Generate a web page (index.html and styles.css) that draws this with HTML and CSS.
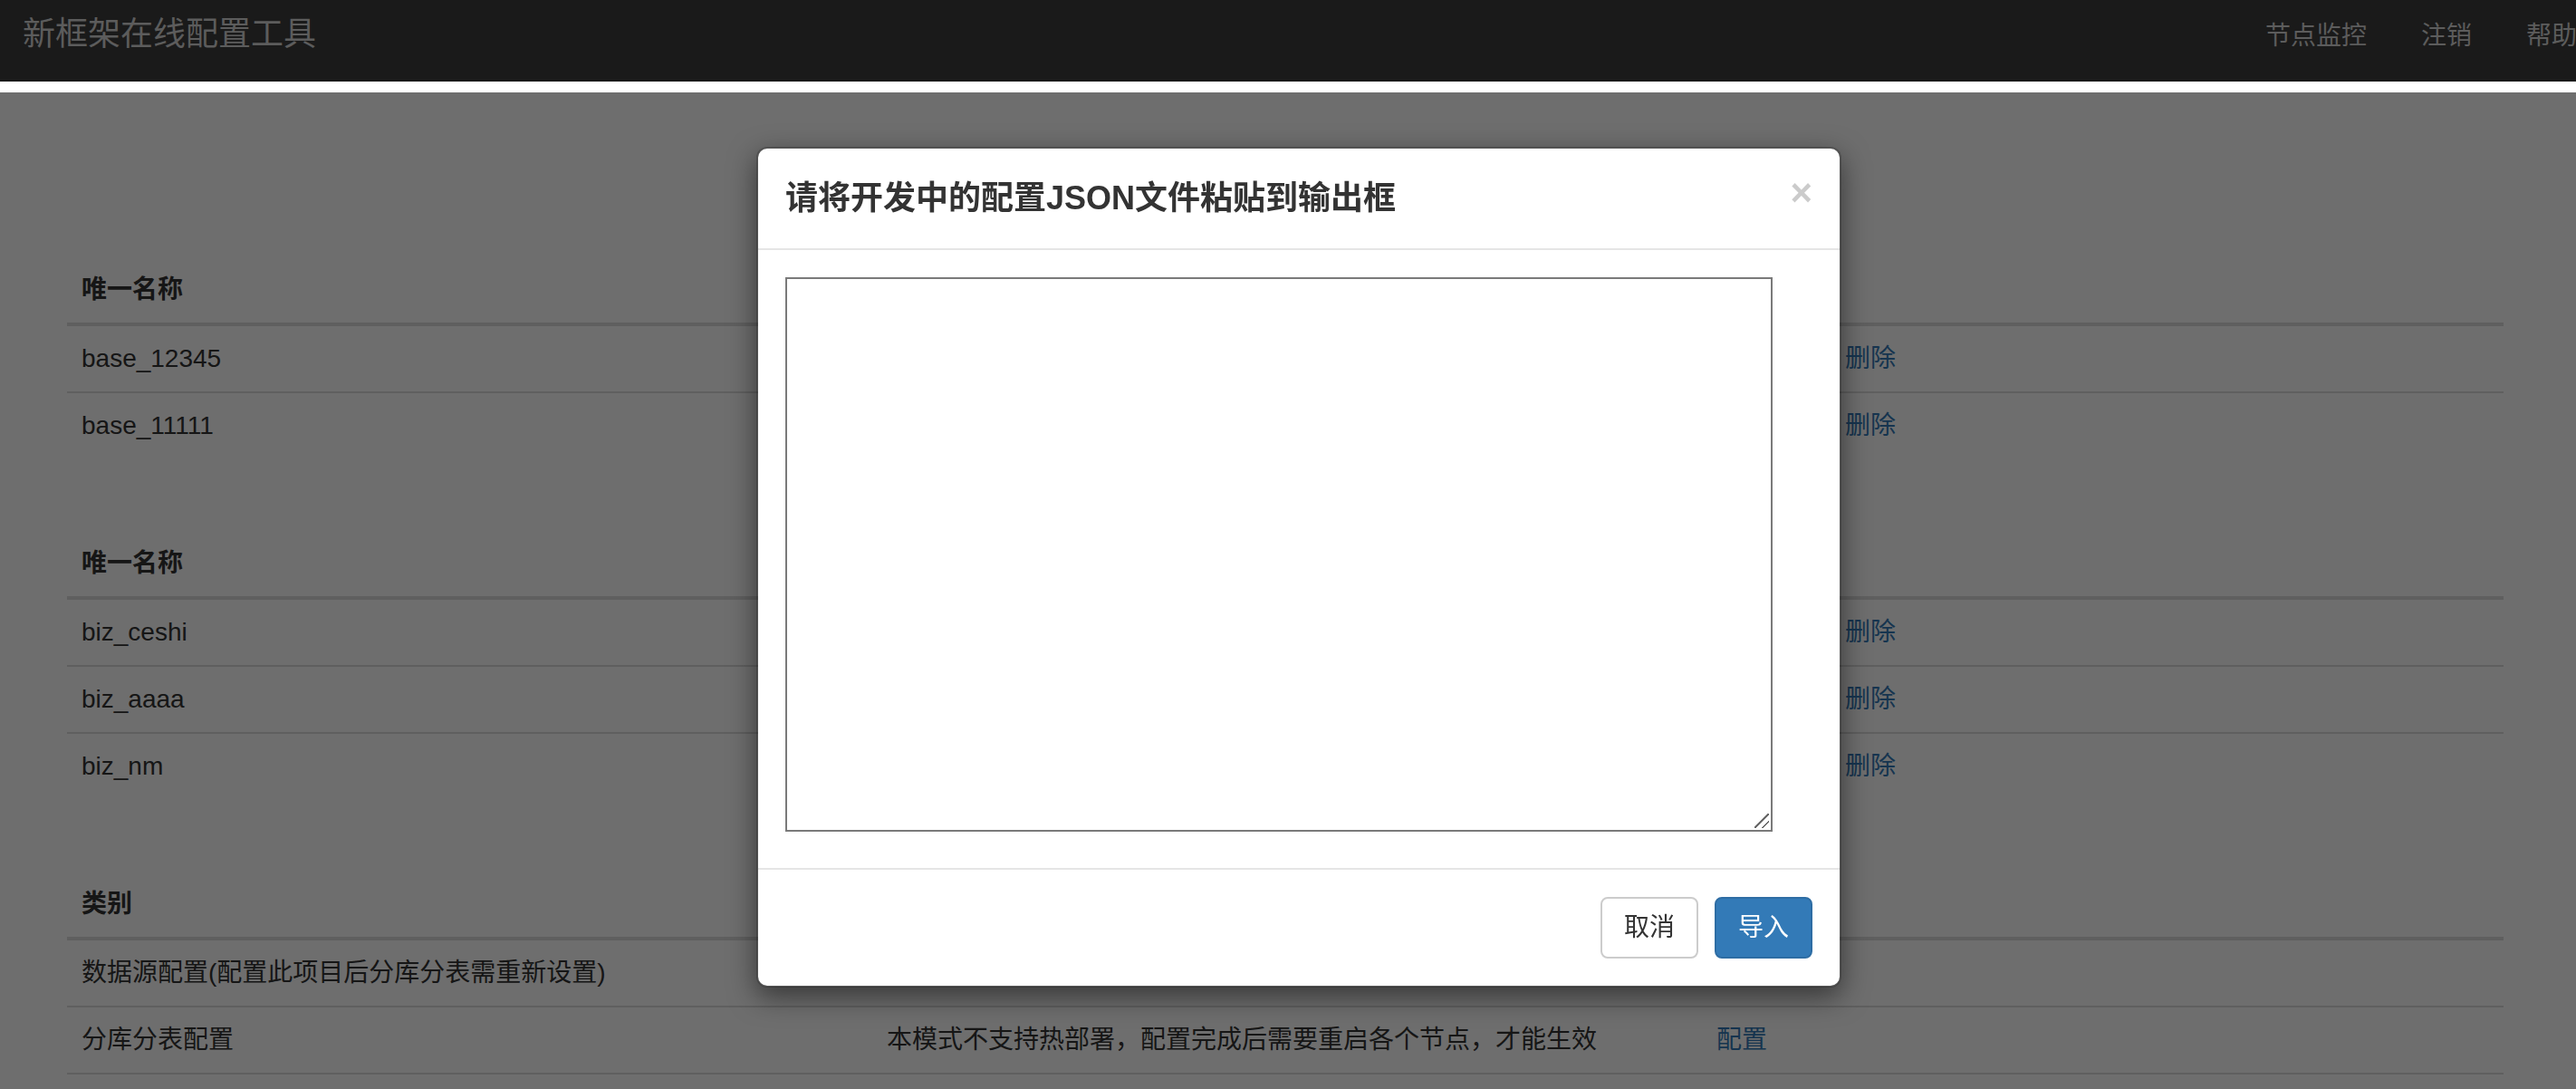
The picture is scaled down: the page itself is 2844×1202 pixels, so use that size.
FILE: index.html
```html
<!DOCTYPE html>
<html lang="zh-CN">
<head>
<meta charset="utf-8">
<title>新框架在线配置工具</title>
<link rel="stylesheet" href="styles.css">
</head>
<body>
<nav class="navbar">
  <a class="brand">新框架在线配置工具</a>
  <ul class="nav-links">
    <li><a>节点监控</a></li>
    <li><a>注销</a></li>
    <li><a>帮助</a></li>
  </ul>
</nav>

<main class="content">
  <table class="table">
    <thead>
      <tr><th class="col-a">唯一名称</th><th class="col-b">描述</th><th>操作</th></tr>
    </thead>
    <tbody>
      <tr><td>base_12345</td><td>基础配置</td><td class="ops"><a>查看</a><a>修改</a><a>删除</a></td></tr>
      <tr><td>base_11111</td><td>基础配置</td><td class="ops"><a>查看</a><a>修改</a><a>删除</a></td></tr>
    </tbody>
  </table>

  <table class="table">
    <thead>
      <tr><th class="col-a">唯一名称</th><th class="col-b">描述</th><th>操作</th></tr>
    </thead>
    <tbody>
      <tr><td>biz_ceshi</td><td>业务配置</td><td class="ops"><a>查看</a><a>修改</a><a>删除</a></td></tr>
      <tr><td>biz_aaaa</td><td>业务配置</td><td class="ops"><a>查看</a><a>修改</a><a>删除</a></td></tr>
      <tr><td>biz_nm</td><td>业务配置</td><td class="ops"><a>查看</a><a>修改</a><a>删除</a></td></tr>
    </tbody>
  </table>

  <table class="table">
    <thead>
      <tr><th class="col-a">类别</th><th class="col-b">说明</th><th>操作</th></tr>
    </thead>
    <tbody>
      <tr><td>数据源配置(配置此项目后分库分表需重新设置)</td><td></td><td><a>配置</a></td></tr>
      <tr><td>分库分表配置</td><td>本模式不支持热部署，配置完成后需要重启各个节点，才能生效</td><td><a>配置</a></td></tr>
      <tr><td>&nbsp;</td><td>&nbsp;</td><td>&nbsp;</td></tr>
    </tbody>
  </table>
</main>

<div class="backdrop"></div>

<div class="modal">
  <div class="modal-content">
    <div class="modal-header">
      <h4 class="modal-title">请将开发中的配置JSON文件粘贴到输出框</h4>
      <button class="close" type="button">×</button>
    </div>
    <div class="modal-body">
      <div class="editor">
        <textarea class="json-input"></textarea>
      </div>
    </div>
    <div class="modal-footer">
      <button class="btn btn-default" type="button">取消</button>
      <button class="btn btn-primary" type="button">导入</button>
    </div>
  </div>
</div>
</body>
</html>
```

FILE: styles.css
```css
* {
  box-sizing: border-box;
}

html, body {
  margin: 0;
  padding: 0;
  overflow: hidden;
  background: #fff;
}

body {
  font-family: "Liberation Sans", "Noto Sans CJK SC", sans-serif;
  font-size: 28px;
  line-height: 40px;
  color: #333;
}

/* ---------- navbar ---------- */
.navbar {
  height: 90px;
  background: #1a1a1a;
  display: flex;
  justify-content: space-between;
  align-items: flex-start;
  overflow: hidden;
}

.brand {
  padding: 18px 0 0 25px;
  font-size: 36px;
  line-height: 40px;
  color: #5c5c5c;
}

.nav-links {
  display: flex;
  list-style: none;
  margin: 0 -31px 0 0;
  padding: 0;
}

.nav-links a {
  display: block;
  padding: 20px 30px;
  font-size: 28px;
  line-height: 40px;
  color: #5c5c5c;
}

/* ---------- content ---------- */
.content {
  padding: 194px 0 0 74px;
}

.table {
  width: 2690px;
  border-collapse: collapse;
  table-layout: fixed;
  margin-bottom: 80px;
}

.table th,
.table td {
  padding: 16px;
  text-align: left;
  vertical-align: top;
  border-top: 2px solid #ddd;
  white-space: nowrap;
}

.table thead th {
  border-top: 0;
  border-bottom: 4px solid #ddd;
  font-weight: bold;
}

.col-a {
  width: 889px;
}

.col-b {
  width: 916px;
}

.table a {
  color: #337ab7;
}

.ops a {
  margin-right: 15px;
}

/* ---------- modal ---------- */
.backdrop {
  position: fixed;
  top: 102px;
  left: 0;
  right: 0;
  bottom: 0;
  background: rgba(0, 0, 0, 0.57);
}

.modal {
  position: fixed;
  top: 162px;
  left: 835px;
  width: 1198px;
}

.modal-content {
  background: #fff;
  background-clip: padding-box;
  border: 2px solid rgba(0, 0, 0, 0.2);
  border-radius: 12px;
  box-shadow: 0 10px 30px rgba(0, 0, 0, 0.5);
}

.modal-header {
  display: flex;
  justify-content: space-between;
  align-items: flex-start;
  padding: 30px;
  border-bottom: 2px solid #e5e5e5;
}

.modal-title {
  margin: 0;
  font-size: 36px;
  line-height: 50px;
  font-weight: bold;
  color: #333;
}

.close {
  margin-top: -2px;
  padding: 0;
  border: 0;
  background: none;
  font-family: "Liberation Sans", sans-serif;
  font-size: 42px;
  line-height: 1;
  font-weight: bold;
  color: #000;
  opacity: 0.2;
  text-shadow: 0 2px 0 #fff;
}

.modal-body {
  padding: 30px 30px 40px;
}

.editor {
  position: relative;
  width: 1090px;
}

.json-input {
  display: block;
  width: 1090px;
  height: 612px;
  margin: 0;
  padding: 4px;
  border: 2px solid #7a7a7a;
  resize: none;
  font-family: "Liberation Mono", monospace;
  font-size: 26px;
}

.editor::after {
  content: "";
  position: absolute;
  right: 4px;
  bottom: 4px;
  width: 16px;
  height: 16px;
  background: linear-gradient(135deg,
    transparent 46%, #6a6a6a 46%, #6a6a6a 55%, transparent 55%,
    transparent 72%, #6a6a6a 72%, #6a6a6a 81%, transparent 81%);
}

.modal-footer {
  display: flex;
  justify-content: flex-end;
  gap: 18px;
  padding: 30px;
  border-top: 2px solid #e5e5e5;
}

.btn {
  padding: 12px 24px;
  font-family: "Liberation Sans", "Noto Sans CJK SC", sans-serif;
  font-size: 28px;
  line-height: 40px;
  border: 2px solid transparent;
  border-radius: 8px;
}

.btn-default {
  color: #333;
  background: #fff;
  border-color: #ccc;
}

.btn-primary {
  color: #fff;
  background: #337ab7;
  border-color: #2e6da4;
}
```
